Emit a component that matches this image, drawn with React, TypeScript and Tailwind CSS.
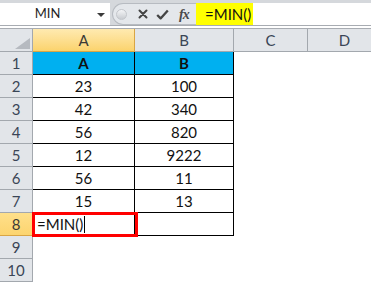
const font = "font-['Lato','Liberation_Sans',sans-serif]";

const data = [
  ["A", "B"],
  ["23", "100"],
  ["42", "340"],
  ["56", "820"],
  ["12", "9222"],
  ["56", "11"],
  ["15", "13"],
];

const cols = [
  { label: "A", w: "w-[102px]" },
  { label: "B", w: "w-[99px]" },
  { label: "C", w: "w-[74px]" },
  { label: "D", w: "w-[74px]" },
];

const FormulaBar = () => (
  <div className="bg-[#d5d8dc] pt-[3px] h-[25px] flex">
    <div className="w-[110px] bg-white flex items-center relative">
      <span className={`w-[95px] text-center text-[13px] text-[#1f1f1f] ${font}`}>MIN</span>
      <svg className="absolute left-[97px] top-[10px]" width="8" height="5" viewBox="0 0 8 5">
        <polygon points="0,0 8,0 4,4" fill="#3b3b3b" />
      </svg>
    </div>
    <div className="ml-[2px] w-[84px] bg-[#e4e7eb] rounded-l-[11px] border border-r-0 border-[#b7bbc1] flex items-center relative">
      <div className="ml-[3px] w-[11px] h-[11px] rounded-full bg-gradient-to-b from-[#f4f5f7] to-[#c9ccd1] border border-[#c3c6cb]" />
      <svg className="ml-[11px]" width="10" height="10" viewBox="0 0 10 10">
        <path d="M1.5 1.5 L8.5 8.5 M8.5 1.5 L1.5 8.5" stroke="#444" strokeWidth="2" strokeLinecap="round" />
      </svg>
      <svg className="ml-[8px]" width="13" height="11" viewBox="0 0 13 11">
        <path d="M1.2 6 L4.6 9.4 L11.8 1.4" stroke="#444" strokeWidth="2.3" fill="none" strokeLinejoin="round" />
      </svg>
      <span className="ml-[10px] text-[14px] italic font-bold text-[#4a4a4a] font-['Liberation_Serif',serif] tracking-[-1px]">fx</span>
    </div>
    <div className="flex-1 bg-white flex">
      <div className={`w-[57px] bg-[#ffff00] pl-[9px] text-[15px] leading-[22px] text-[#111] ${font}`}>=MIN()</div>
    </div>
  </div>
);

export default function App() {
  return (
    <div className={`w-[371px] h-[283px] overflow-hidden bg-white ${font}`}>
      <FormulaBar />
      <div className="h-[4px] border-t border-b border-[#a8acb2] bg-white" />
      <div className="flex h-[23px]">
        <div className="w-[33px] shrink-0 bg-[#e2e5e9] border-r border-b border-[#a3a8ae] relative">
          <svg className="absolute left-[15px] top-[9px]" width="15" height="11" viewBox="0 0 15 11">
            <polygon points="15,0 15,11 0,11" fill="#b6bac0" />
          </svg>
        </div>
        {cols.map((c, i) => (
          <div
            key={c.label}
            className={`${c.w} shrink-0 border-r border-b flex items-center justify-center text-[15px] ${
              i === 0
                ? "bg-gradient-to-b from-[#ffeab0] to-[#fbd36c] border-[#d9a544] text-[#3b3a36]"
                : "bg-[#e2e5e9] border-[#a3a8ae] text-[#3a4556]"
            }`}
          >
            {c.label}
          </div>
        ))}
      </div>
      {Array.from({ length: 10 }, (_, r) => {
        const row = r + 1;
        const vals = data[r];
        const inTable = row <= 8;
        return (
          <div key={row} className="flex h-[23px]">
            <div
              className={`w-[33px] shrink-0 border-r border-b flex items-center justify-center text-[15px] ${
                row === 8
                  ? "bg-gradient-to-b from-[#ffe08a] to-[#fcd46f] border-[#d9a544] text-[#3b3a36]"
                  : "bg-[#e2e5e9] border-[#a3a8ae] text-[#3a4556]"
              }`}
            >
              {row}
            </div>
            {[0, 1].map((ci) => (
              <div
                key={ci}
                className={`${cols[ci].w} shrink-0 flex items-center justify-center text-[15px] text-[#111] ${
                  inTable ? "border-r border-b border-black" : ""
                } ${row === 1 ? "bg-[#00b0f0] font-bold" : ""} ${row === 8 && ci === 0 ? "relative justify-start" : ""}`}
              >
                {vals ? vals[ci] : null}
                {row === 8 && ci === 0 && (
                  <>
                    <span className="pl-[4px] flex items-center">
                      =MIN()
                      <span className="ml-[1px] w-[1px] h-[17px] bg-black" />
                    </span>
                    <div className="absolute left-[-1px] top-[-1px] w-[106px] h-[25px] border-[3.5px] border-[#ff0000]" />
                  </>
                )}
              </div>
            ))}
          </div>
        );
      })}
    </div>
  );
}
